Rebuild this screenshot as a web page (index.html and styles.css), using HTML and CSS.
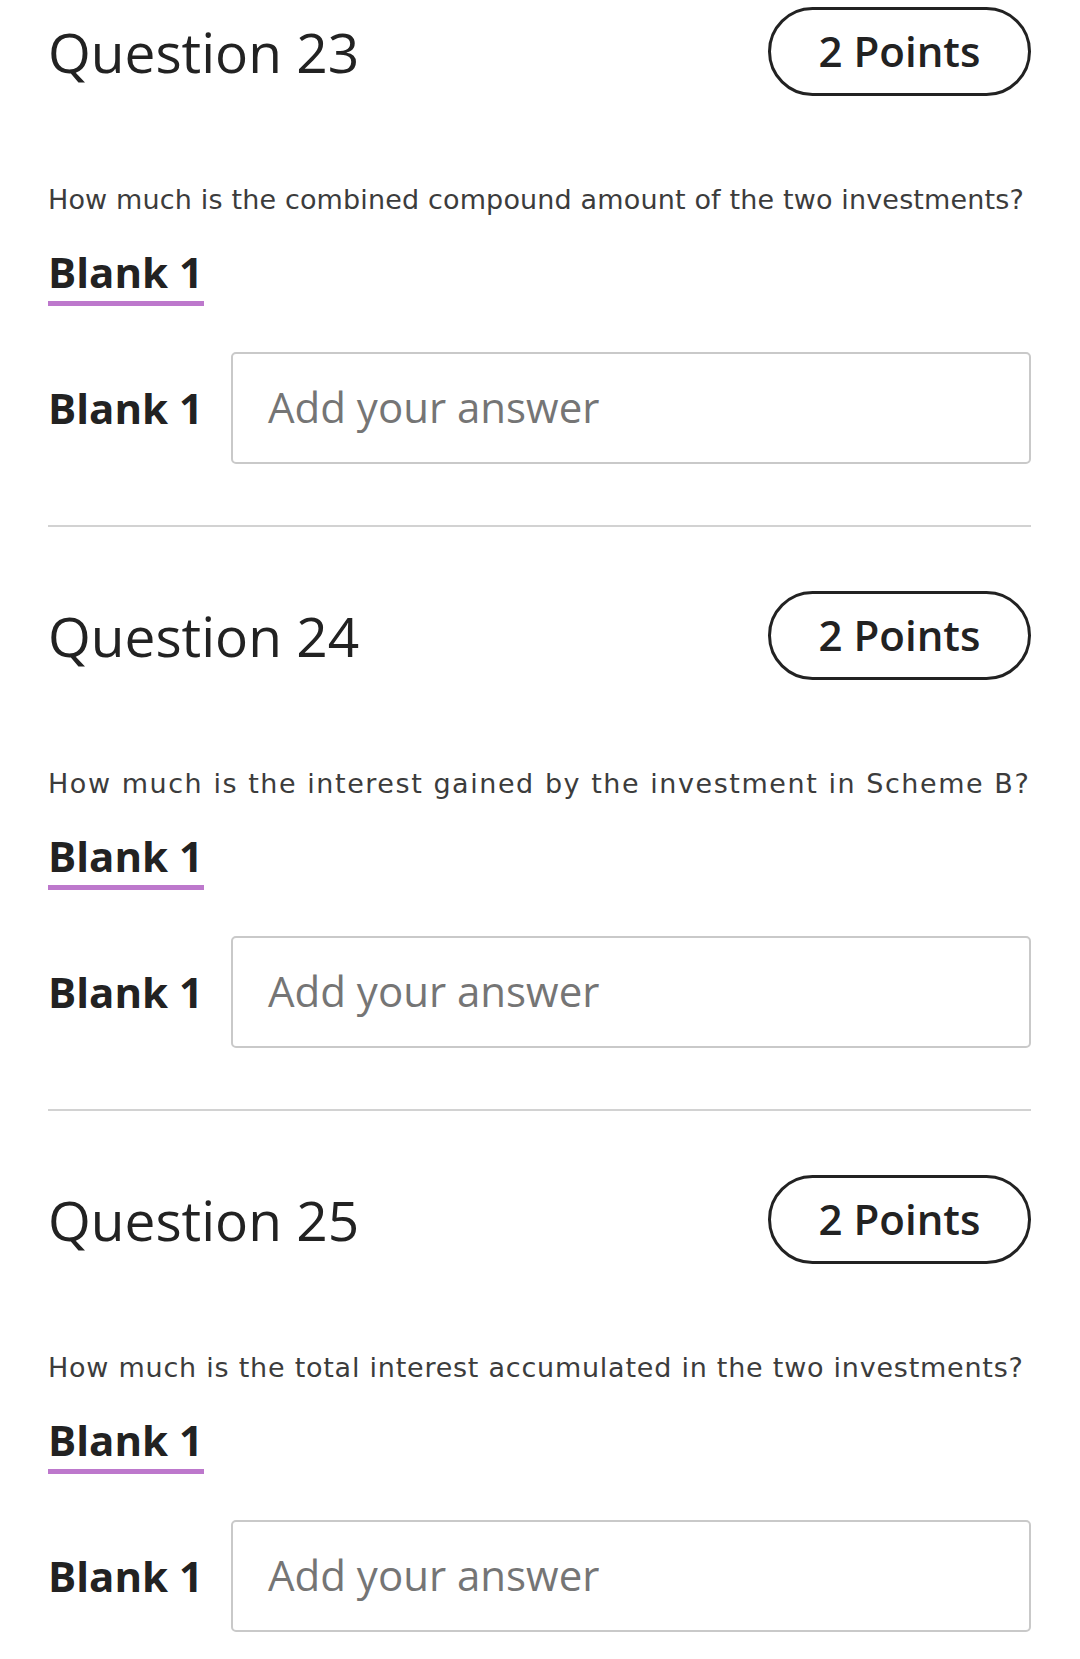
FILE: index.html
```html
<!DOCTYPE html>
<html lang="en">
<head>
<meta charset="utf-8">
<title>Questions</title>
<link rel="stylesheet" href="styles.css">
</head>
<body>
<main class="page">
  <section class="question">
    <header class="q-head">
      <h2 class="q-title">Question 23</h2>
      <span class="points">2 Points</span>
    </header>
    <p class="q-text">How much is the combined compound amount of the two investments?</p>
    <div class="blank-tab"><span class="blank-tab-label">Blank 1</span></div>
    <div class="answer-row">
      <label class="answer-label">Blank 1</label>
      <div class="answer-input">Add your answer</div>
    </div>
  </section>
  <hr class="divider">
  <section class="question">
    <header class="q-head">
      <h2 class="q-title">Question 24</h2>
      <span class="points">2 Points</span>
    </header>
    <p class="q-text q-text--wide">How much is the interest gained by the investment in Scheme B?</p>
    <div class="blank-tab"><span class="blank-tab-label">Blank 1</span></div>
    <div class="answer-row">
      <label class="answer-label">Blank 1</label>
      <div class="answer-input">Add your answer</div>
    </div>
  </section>
  <hr class="divider">
  <section class="question">
    <header class="q-head">
      <h2 class="q-title">Question 25</h2>
      <span class="points">2 Points</span>
    </header>
    <p class="q-text q-text--mid">How much is the total interest accumulated in the two investments?</p>
    <div class="blank-tab"><span class="blank-tab-label">Blank 1</span></div>
    <div class="answer-row">
      <label class="answer-label">Blank 1</label>
      <div class="answer-input">Add your answer</div>
    </div>
  </section>
</main>
</body>
</html>
```
FILE: styles.css
```css
* { box-sizing: border-box; }
html, body { margin: 0; padding: 0; background: #ffffff; }
body { font-family: "Open Sans", "Noto Sans", sans-serif; color: #222222; }

.page {
  padding: 7px 49px 0 48px;
  width: 1080px;
}

.q-head {
  display: flex;
  align-items: center;
  justify-content: space-between;
  height: 89px;
}

.q-title {
  margin: 0;
  font-size: 55px;
  font-weight: 500;
  line-height: 60px;
  color: #222222;
}

.points {
  display: flex;
  align-items: center;
  justify-content: center;
  width: 263px;
  height: 89px;
  border: 3px solid #222222;
  border-radius: 45px;
  font-size: 42px;
  font-weight: 600;
  color: #222222;
  padding-bottom: 2px;
}

.q-text {
  margin: 84px 0 0 0;
  font-family: "DejaVu Sans", "Noto Sans", sans-serif;
  font-size: 27px;
  line-height: 40px;
  letter-spacing: 0.15px;
  color: #3c3c3c;
  white-space: nowrap;
}

.q-text--wide { letter-spacing: 1.55px; }
.q-text--mid { letter-spacing: 0.76px; }

.blank-tab {
  margin-top: 28px;
}

.blank-tab-label {
  display: inline-block;
  font-size: 42px;
  font-weight: 700;
  line-height: 48px;
  padding: 0 1px 5px 0;
  border-bottom: 5px solid #bd78cc;
  color: #222222;
}

.answer-row {
  display: flex;
  align-items: center;
  margin-top: 46px;
}

.answer-label {
  width: 183px;
  font-size: 42px;
  font-weight: 700;
  line-height: 48px;
  color: #222222;
}

.answer-input {
  flex: 1;
  height: 112px;
  border: 2px solid #c9c9c9;
  border-radius: 5px;
  display: flex;
  align-items: center;
  padding: 0 0 4px 35px;
  font-size: 42px;
  color: #757575;
}

.divider {
  margin: 61px 0 64px 0;
  border: 0;
  height: 2px;
  background: #d2d2d2;
}
```
